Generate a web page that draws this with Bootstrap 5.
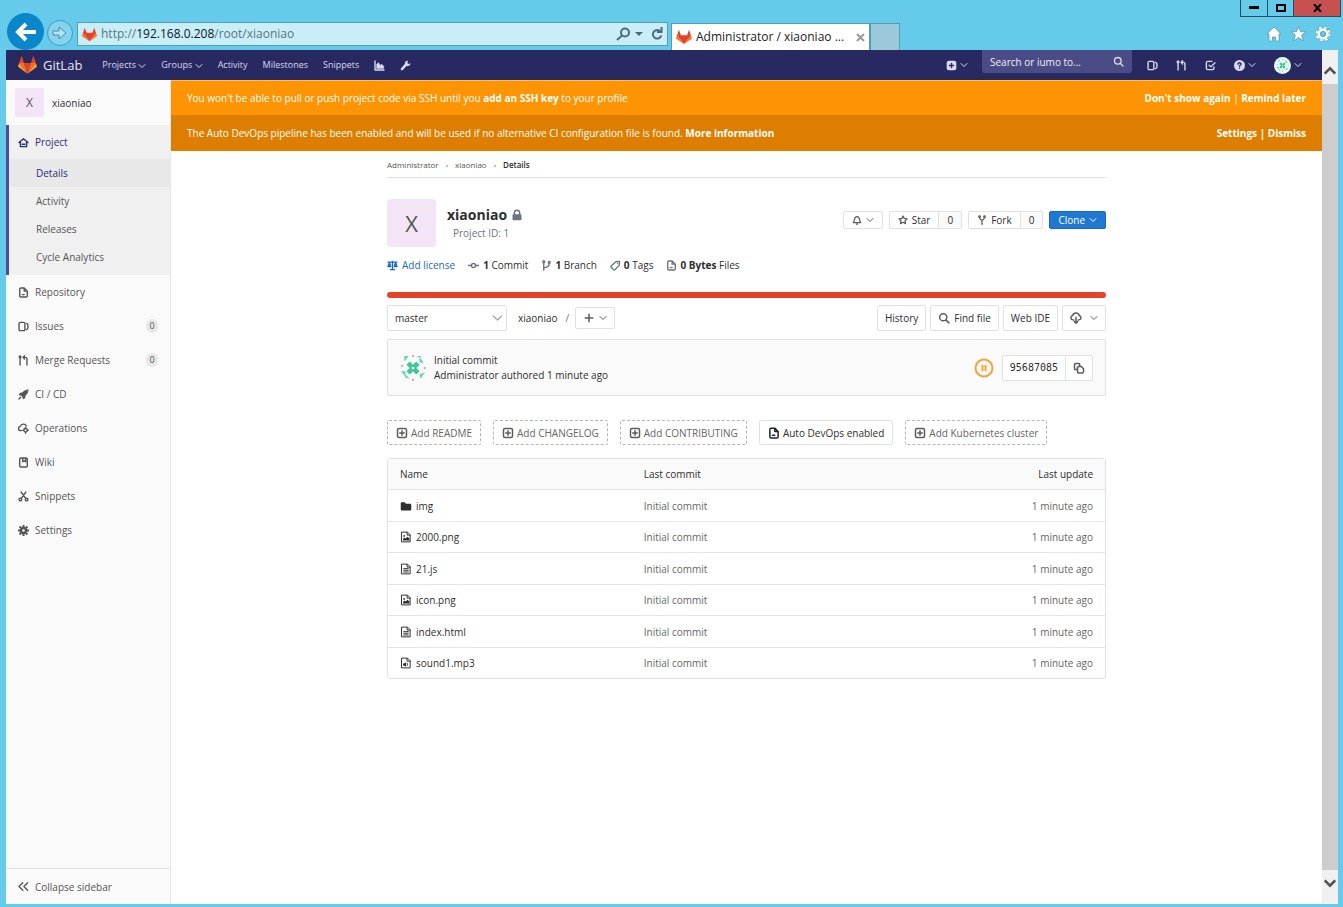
<!DOCTYPE html>
<html lang="en">
<head>
<meta charset="utf-8">
<meta name="viewport" content="width=device-width, initial-scale=1">
<title>Administrator / xiaoniao · GitLab</title>
<link href="https://cdn.jsdelivr.net/npm/bootstrap@5.3.0/dist/css/bootstrap.min.css" rel="stylesheet">
<style>
:root{--ui:"Open Sans","Noto Sans",sans-serif}
body{font-family:var(--ui);font-size:10px;line-height:16px;color:#2e2e2e;background:#66caea}
a{color:inherit;text-decoration:none}
button{font-family:inherit}
b{font-weight:700}
.ico{width:12px;height:12px;fill:none;stroke:currentColor;stroke-width:2;stroke-linecap:round;stroke-linejoin:round;flex:none}
.ico-sm{width:8px;height:8px}
.fox{flex:none}
.plain{border:0;background:none;padding:0;color:inherit;display:flex;align-items:center}
.tight{gap:3px}

/* browser window */
.window-top{height:50px;padding-left:7px}
.nav-back{width:37px;height:37px;border-radius:50%;background:#0a86cb;color:#fff;justify-content:center}
.nav-forward{width:26px;height:26px;margin-left:3px;border-radius:50%;border:1px solid #3f9cc4;background:#85d3ee;justify-content:center}
.address{flex:0 0 591px;height:24px;border:1px solid #4f9fb8;background:#c9eef8;font-size:12px;color:#557681}
.address b{font-weight:400;color:#08181f}
.tab-page{width:199px;height:27px;margin-left:3px;background:#fff;border:1px solid #4f9fb8;border-bottom:0;font-size:12px;color:#222}
.tab-new{width:30px;height:27px;background:#9cc9da;border:1px solid #4f9fb8;border-bottom:0}
.win-btns{height:17px;margin-right:2px}
.win-btns button{width:28px;height:17px;border:1px solid #25505f;border-top:0;justify-content:center;color:#000}
.win-btns button+button{width:26px;border-left:0}
.win-btns .win-close{width:47px!important;background:#c75050}
.frame{padding:0 5px 3px 6px}

/* application bar */
.app-bar{height:30px;background:#292961;color:#d9d9f0;font-size:9px}
.app-bar .ico{width:11px;height:11px}
.app-bar .ico-sm{width:8px;height:8px}
.app-bar .brand{font-size:13px;gap:6px;color:#e6e6f5}
.app-links{gap:15px}
.app-tools{gap:18px;margin-left:15px}
.new-menu{margin-right:14px}
.search-box{width:150px;height:23px;background:#4b4b85;border-radius:0 0 3px 3px}
.search-box input{width:100%;border:0;background:none;color:#fff;outline:0;padding:0;font-size:10px}
.search-box input::placeholder{color:#f0f0fa;opacity:1}

/* sidebar */
.side{width:165px;background:#fafafa;border-right:1px solid #e6e6e6;color:#555;flex:none}
.side-head{height:45px;padding-left:9px;color:#2e2e2e}
.letter{background:#f3e5f5;color:#555;display:flex;align-items:center;justify-content:center}
.letter-sm{width:29px;height:29px;border-radius:2px;font-size:12px}
.letter-lg{width:49px;height:48px;border-radius:4px;font-size:22px}
.side a{display:flex;align-items:center;height:34px;padding:0 12px;gap:6px}
.side .ico{width:11px;height:11px}
.side-group{background:#f0f0f0;border-left:3px solid #4b4ba3;padding-bottom:4px}
.side-group a{padding-left:9px}
.side-group .sub{height:28px;padding-left:27px}
.side-group .on{background:#e8e8e8}
.side .cur{color:#2f2a78}
.count{margin-left:auto;background:#e8e8e8;border-radius:8px;width:12px;height:14px;line-height:14px;text-align:center;font-size:9px}
.side .collapse-link{border-top:1px solid #e1e1e1;height:36px}

/* scroll bar */
.scroll{width:16px;flex:none;background:#cdcdcd}
.scroll button{height:34px;width:100%;background:#f0f0f0;justify-content:center;color:#505050}
.scroll .ico{width:14px;height:14px;stroke-width:3;stroke-linecap:butt;stroke-linejoin:miter}
.scroll .to-top{padding-top:8px}
.scroll .to-end{padding-bottom:8px}

/* banners */
.note{color:#fff;padding:0 16px}
.note-a{background:#fc9403;height:35px;border-top:1px solid #fdbc60}
.note-b{background:#de7e00;height:36px}

/* project page */
.page{width:100%;max-width:719px;margin:0 auto}
.crumbs{height:27px;padding-top:2px;gap:7px;border-bottom:1px solid #e1e1e1;font-size:8px;line-height:12px;color:#555}
.crumbs b{font-weight:600;color:#2e2e2e}
.proj-head{margin-top:21px}
.proj-name{font-size:14px;line-height:18px}
.proj-title{padding:7px 0 0 11px}
.proj-id{padding-left:6px;line-height:18px}
.proj-actions{gap:6px;margin-top:12px}
.proj-stats{gap:13px;margin-top:10px}
.proj-stats .ico{width:11px;height:11px}
.add-license{color:#1b69b6}
.btn-x{--bs-btn-font-size:10px;--bs-btn-line-height:16px;--bs-btn-padding-y:4px;--bs-btn-padding-x:7px;--bs-btn-color:#2e2e2e;--bs-btn-bg:#fff;--bs-btn-border-color:#e1e1e1;--bs-btn-border-radius:2px;display:inline-flex;align-items:center;white-space:nowrap;gap:4px}
.btn-x .ico{color:#5c5c5c}
.btn-s{--bs-btn-padding-y:0px;--bs-btn-padding-x:8px;height:18px}
.btn-s .ico{width:10px;height:10px}
.btn-s .ico-sm{width:8px;height:8px}
.btn-add{--bs-btn-padding-x:8px;height:25px;gap:3px}
.btn-dash{--bs-btn-color:#666;border:1px dashed #b5b5b5}
.btn-clone{--bs-btn-color:#fff;--bs-btn-bg:#1f78d1;--bs-btn-border-color:#1b69b6}
.btn-clone .ico{color:#fff}
.num{background:#fafafa}
.lang-bar{height:6px;margin-top:19px;border-radius:3px;background:#e24329}
.tree-bar{margin-top:7px}
.tree-path{margin-left:11px}
.slash{margin:0 6px 0 8px}
.ref-pick{width:120px;height:26px;border:1px solid #e1e1e1;border-radius:2px;padding:0 7px;font-size:10px;color:#2e2e2e;background:#fff;appearance:none;display:block}
.ref-arrow{width:11px;color:#aaa;pointer-events:none}
.commit{height:57px;background:#fafafa;border:1px solid #e1e1e1;border-radius:2px;padding:0 12px;line-height:15px}
.sha{font-family:"DejaVu Sans Mono",monospace}
.add-row{gap:12px}
.files{--bs-table-bg:transparent;margin:13px 0 0;font-size:10px;color:#2e2e2e;border:1px solid #e1e1e1;border-collapse:separate;border-spacing:0;border-radius:3px;table-layout:fixed}
.files th,.files td{font-weight:400;padding:0 12px;vertical-align:middle;border:0;border-top:1px solid #e5e5e5}
.files th{background:#fafafa;border:0;height:30px}
.files .col-name{width:34%}
.files td{height:32px;color:#666}
.files tr:nth-child(even) td{height:31px}
.files td:first-child{color:#2e2e2e}
.files .ico{margin-right:4px;vertical-align:-2px}
</style>
</head>
<body>
<svg class="d-none" aria-hidden="true">
  <symbol id="fox" viewBox="0 0 36 34"><path fill="#e24329" d="M18 33.500l6.600-20.300H11.400z"/><path fill="#fc6d26" d="M18 33.500L11.400 13.200H2.200zM18 33.500l6.600-20.300h9.200z"/><path fill="#fca326" d="M2.200 13.200L.2 19.400c-.2.600 0 1.200.5 1.500L18 33.500zM33.800 13.200l2 6.200c.2.600 0 1.200-.5 1.500L18 33.500z"/><path fill="#e24329" d="M2.200 13.200h9.200L7.500 1c-.2-.6-1.100-.6-1.300 0zM33.800 13.200h-9.200L28.500 1c.2-.6 1.100-.6 1.300 0z"/></symbol>
  <symbol id="favfox" viewBox="0 0 36 34"><path fill="#e24329" d="M2 13h32L18 33z"/><path fill="#fc6d26" d="M.2 19.400L2.500 13l15.500 20L.7 20.900zM35.800 19.400L33.500 13 18 33l17.300-12.100z"/><path fill="#e24329" d="M2.200 14L6.500.5 11.500 14zM33.800 14L29.500.5 24.500 14z"/></symbol>
  <symbol id="down" viewBox="0 0 16 16"><path d="M2 5l6 6 6-6"/></symbol>
  <symbol id="up" viewBox="0 0 16 16"><path d="M2 11l6-6 6 6"/></symbol>
  <symbol id="home" viewBox="0 0 16 16"><path d="M1.500 8L8 2.500 14.500 8M3.500 7.500V14h9V7.500M6 10.500h4"/></symbol>
  <symbol id="doc" viewBox="0 0 16 16"><path d="M4 1.500h5L13.500 6v7a1.500 1.500 0 0 1-1.500 1.500H4A1.500 1.500 0 0 1 2.500 13V3A1.500 1.500 0 0 1 4 1.500zM9 2v4h4M6 11h3"/></symbol>
  <symbol id="issues" viewBox="0 0 16 16"><path d="M3 2h5.500A1.500 1.500 0 0 1 10 3.500v9A1.500 1.500 0 0 1 8.500 14H3a1.500 1.500 0 0 1-1.500-1.500v-9A1.500 1.500 0 0 1 3 2zM12.500 3.500c1.300.6 2 1.500 2 3v3c0 1.500-.7 2.400-2 3"/></symbol>
  <symbol id="merge" viewBox="0 0 16 16"><path d="M3 5v9.500M8 3.500h3a2 2 0 0 1 2 2v9M9.500 1L7.500 3.500l2 2.500"/><circle cx="3" cy="2.800" r="1.300"/></symbol>
  <symbol id="rocket" viewBox="0 0 16 16"><path fill="currentColor" stroke-width="1" d="M14.500 1.500c-4 0-6 1.500-8 4l-3.500.5-1.500 2.500 3 .5L7 11.500l.5 3L10 13l.5-3.500c2.500-2 4-4 4-8z"/><path d="M1.500 14.500L4 12"/></symbol>
  <symbol id="ops" viewBox="0 0 16 16"><path d="M5 11H4a3 3 0 0 1-.5-6A4.500 4.500 0 0 1 12 4.500"/><circle cx="11" cy="10.500" r="2.500"/><path d="M11 6.500v1M11 14v1M8 10.500H7M15 10.500h-1"/></symbol>
  <symbol id="book" viewBox="0 0 16 16"><path d="M4 1.500h8A1.500 1.500 0 0 1 13.500 3v10a1.500 1.500 0 0 1-1.500 1.500H4A1.500 1.500 0 0 1 2.500 13V3A1.500 1.500 0 0 1 4 1.500zM7 2v5l2-1.500L11 7V2"/></symbol>
  <symbol id="cut" viewBox="0 0 16 16"><circle cx="3.500" cy="12.500" r="2"/><circle cx="12.500" cy="12.500" r="2"/><path d="M4.500 1.500l7 9.500M11.500 1.500l-7 9.500"/></symbol>
  <symbol id="gear" viewBox="0 0 16 16"><circle cx="8" cy="8" r="3.700" stroke-width="3.500"/><path stroke-width="3" stroke-linecap="butt" d="M8 0v3M8 13v3M0 8h3M13 8h3M2.300 2.300l2 2M11.700 11.700l2 2M2.300 13.700l2-2M11.700 4.300l2-2"/></symbol>
  <symbol id="left2" viewBox="0 0 16 16"><path d="M7 2.500L1.500 8 7 13.500M14 2.500L8.500 8l5.500 5.500"/></symbol>
  <symbol id="glass" viewBox="0 0 16 16"><circle cx="7" cy="7" r="4.800"/><path d="M10.500 10.500L14.500 14.500"/></symbol>
  <symbol id="todo" viewBox="0 0 16 16"><path d="M10 2H4a2 2 0 0 0-2 2v8a2 2 0 0 0 2 2h7a2 2 0 0 0 2-2v-2M6 7.500l2.500 2.500L14.500 4"/></symbol>
  <symbol id="help" viewBox="0 0 16 16"><circle cx="8" cy="8" r="8" fill="currentColor" stroke="none"/><path stroke="#292961" d="M5.800 6.200c0-3 4.600-2.800 4.400 0C10.100 7.600 8 7.700 8 9.300M8 12v.1"/></symbol>
  <symbol id="plusbox" viewBox="0 0 16 16"><rect x="2" y="2" width="12" height="12" rx="2"/><path d="M8 5v6M5 8h6"/></symbol>
  <symbol id="plusfill" viewBox="0 0 16 16"><rect x="1" y="1" width="14" height="14" rx="3" fill="currentColor" stroke="none"/><path stroke="#292961" d="M8 5v6M5 8h6"/></symbol>
  <symbol id="plus" viewBox="0 0 16 16"><path d="M8 3v10M3 8h10"/></symbol>
  <symbol id="chart" viewBox="0 0 16 16"><path d="M1.500 1.500v13h13"/><path fill="currentColor" stroke-width="1" d="M4 12V6l2.500-2L9 8l2-2 3 3v3z"/></symbol>
  <symbol id="wrench" viewBox="0 0 16 16"><path fill="currentColor" stroke="none" d="M15 4.500L12.500 6 10.500 4 12 1.200C9 .3 6.500 2.600 7.200 5.600L1.600 12c-1.500 2 1 4 2.600 2.500L9.500 8.700c3.500 1 6-1.400 5.500-4.200z"/></symbol>
  <symbol id="lock" viewBox="0 0 16 16"><rect x="2" y="7" width="12" height="8" rx="1.500" fill="currentColor" stroke="none"/><path d="M4.500 8V5a3.500 3.500 0 0 1 7 0v3"/></symbol>
  <symbol id="scale" viewBox="0 0 16 16"><path d="M1.500 3h13M8 2v12M5 14h6"/><path fill="currentColor" fill-opacity=".4" d="M3.500 4L1.500 9.500h4zM12.500 4l-2 5.500h4z"/></symbol>
  <symbol id="commit" viewBox="0 0 16 16"><circle cx="8" cy="8" r="3"/><path d="M0 8h4.500M11.500 8H16"/></symbol>
  <symbol id="branch" viewBox="0 0 16 16"><circle cx="4" cy="2.500" r="1.400"/><circle cx="12" cy="3.500" r="1.400"/><path d="M4 4v11M4 11c5 0 8-2 8-6"/></symbol>
  <symbol id="fork" viewBox="0 0 16 16"><circle cx="4" cy="2.800" r="1.300"/><circle cx="12" cy="2.800" r="1.300"/><path d="M4 4c0 3 4 3 4 5.500C8 7 12 7 12 4M8 9v6"/></symbol>
  <symbol id="tag" viewBox="0 0 16 16"><path d="M8.500 2.500L14 2l-.5 5.500-6 6.500c-.8.800-1.700.8-2.500 0L2 11c-.8-.8-.8-1.700 0-2.500z"/><path d="M11 5v.1"/></symbol>
  <symbol id="bell" viewBox="0 0 16 16"><path d="M2 12c1.500-1.500 1.500-3 2-5 .5-3 2-4.500 4-4.500S11.500 4 12 7c.5 2 .5 3.500 2 5zM7 14.500h2"/></symbol>
  <symbol id="star" viewBox="0 0 16 16"><path d="M8 1.500l2 4 4.500.7-3.200 3.100.7 4.500-4-2.100-4 2.100.7-4.500L1.500 6.200 6 5.500z"/></symbol>
  <symbol id="cloud" viewBox="0 0 16 16"><path d="M5 10.500H4a3 3 0 0 1-.5-5.900 4.700 4.700 0 0 1 9 .4 2.800 2.800 0 0 1-.5 5.500h-1M8 7v8M5.800 12.800L8 15l2.200-2.200"/></symbol>
  <symbol id="copy" viewBox="0 0 16 16"><path d="M5 10H3.500A1.500 1.500 0 0 1 2 8.500v-5A1.500 1.500 0 0 1 3.500 2h4A1.500 1.500 0 0 1 9 3.500V5M7.500 6H11l3 3v4a1.500 1.500 0 0 1-1.500 1.500h-5A1.500 1.500 0 0 1 6 13V7.500A1.500 1.500 0 0 1 7.500 6z"/></symbol>
  <symbol id="folder" viewBox="0 0 16 16"><path fill="currentColor" stroke="none" d="M1 4.500C1 3.700 1.700 3 2.500 3h3.700L8 5h5.500c.8 0 1.500.7 1.500 1.500v6c0 .8-.7 1.500-1.500 1.500h-11C1.700 14 1 13.300 1 12.500z"/></symbol>
  <symbol id="fimg" viewBox="0 0 16 16"><path stroke-width="1.300" d="M2.500 1.500h7.500l3.500 3.500v9.500h-11zM9.500 2v3.500h4"/><path fill="currentColor" stroke="none" d="M4 12.500v-2l2-2 1.500 1.500L10 7.500l2.500 2.500v2.500z"/><circle cx="5.500" cy="6.500" r="1.200" fill="currentColor" stroke="none"/></symbol>
  <symbol id="ftext" viewBox="0 0 16 16"><path stroke-width="1.300" d="M2.500 1.500h7.500l3.500 3.500v9.500h-11zM9.500 2v3.500h4M5 7.500h6M5 9.700h6M5 12h6"/></symbol>
  <symbol id="fsnd" viewBox="0 0 16 16"><path stroke-width="1.300" d="M2.500 1.500h7.500l3.500 3.500v9.500h-11zM9.500 2v3.500h4M9.500 8c.8 1 .8 2.500 0 3.500"/><path fill="currentColor" stroke="none" d="M4 8.700h1.500L8 7v6l-2.500-1.700H4z"/></symbol>
  <symbol id="ident" viewBox="0 0 24 24"><path fill="#3ac79a" d="M9 6l3 3 3-3 3 3-3 3 3 3-3 3-3-3-3 3-3-3 3-3-3-3z"/><path fill="#fff" d="M12 10.500l1.500 1.500-1.500 1.500-1.500-1.500z"/><path fill="#57d9b1" d="M4 1h4l-4 5zM18 2l4 5h-4zM1 15h4v5zM18 18l5-2-4 6zM9 22l-4-1v-3zM15 1h4v2z"/><path fill="#e0a9bb" d="M11 0h2v2h-2zM1 9h2v2H1zM22 11h2v2h-2zM11 22h2v2h-2z"/></symbol>
</svg>

<div class="d-flex flex-column min-vh-100">
  <header class="window-top d-flex align-items-end">
    <button class="plain nav-back" aria-label="Back"><svg width="22" height="20" viewBox="0 0 22 20" fill="none" stroke="#fff" stroke-width="4"><path d="M21 10H4M11 2l-8 8 8 8"/></svg></button>
    <button class="plain nav-forward mb-1" aria-label="Forward"><svg width="16" height="14" viewBox="0 0 16 14" fill="#b5e5f5" stroke="#3f8fae"><path d="M1 5h6V1l7 6-7 6V9H1z"/></svg></button>
    <div class="address d-flex align-items-center ms-1 mb-1 px-1">
      <svg class="fox" width="15" height="15"><use href="#favfox"/></svg>
      <span class="ms-1 flex-grow-1" role="textbox" aria-label="Address">http://<b>192.168.0.208</b>/root/xiaoniao</span>
      <button class="plain" aria-label="Search"><svg width="15" height="14" viewBox="0 0 15 14" fill="none" stroke="#4d6c78" stroke-width="2"><circle cx="9" cy="5.500" r="4"/><path d="M6 8.500L1 13"/></svg></button>
      <button class="plain ms-1" aria-label="Address list"><svg width="8" height="5" viewBox="0 0 8 5" fill="#4d6c78"><path d="M0 0h8L4 4z"/></svg></button>
      <button class="plain ms-2" aria-label="Refresh"><svg width="12" height="14" viewBox="0 0 12 14" fill="none" stroke="#4d6c78" stroke-width="2"><path d="M9.500 4.500a4.300 4.300 0 1 0 .8 4M10.500 0v5H6"/></svg></button>
    </div>
    <div class="tab-page d-flex align-items-center px-1">
      <svg class="fox" width="16" height="16"><use href="#favfox"/></svg>
      <span class="ms-1 flex-grow-1 text-nowrap">Administrator / xiaoniao ...</span>
      <button class="plain" aria-label="Close tab"><svg width="9" height="9" viewBox="0 0 9 9" stroke="#999" stroke-width="2"><path d="M1 1l7 7M8 1L1 8"/></svg></button>
    </div>
    <button class="tab-new" aria-label="New tab"></button>
    <div class="ms-auto align-self-stretch d-flex flex-column align-items-end">
      <div class="win-btns d-flex">
        <button class="plain" aria-label="Minimize"><svg width="10" height="4"><path d="M0 0h10v3H0z"/></svg></button>
        <button class="plain" aria-label="Maximize"><svg width="10" height="8" fill="none" stroke="#000" stroke-width="2"><path d="M1 1h8v6H1z"/></svg></button>
        <button class="plain win-close" aria-label="Close"><svg width="9" height="8" viewBox="0 0 9 8" stroke="#000" stroke-width="2"><path d="M1 0l7 8M8 0L1 8"/></svg></button>
      </div>
      <div class="d-flex mt-auto mb-2 me-2 pe-1 gap-2">
        <button class="plain" aria-label="Home"><svg width="16" height="16" viewBox="0 0 16 16" fill="#fff" stroke="#5a8da0" stroke-width=".7"><path d="M8 1l7 7h-2v7H9.500v-4h-3v4H3V8H1z"/></svg></button>
        <button class="plain" aria-label="Favorites"><svg width="17" height="16" viewBox="0 0 16 16" fill="#fff" stroke="#5a8da0" stroke-width=".7"><path d="M8 .5l2 5.300h5.500L11.200 9l1.600 6L8 11.500 3.200 15l1.600-6L.5 5.800H6z"/></svg></button>
        <button class="plain" aria-label="Tools"><svg width="16" height="16" viewBox="0 0 16 16" fill="none" stroke="#fff"><circle cx="8" cy="8" r="6.800" stroke="#5a8da0" stroke-width="2.400" stroke-dasharray="2.670"/><circle cx="8" cy="8" r="6.500" stroke-width="2" stroke-dasharray="2.550"/><circle cx="8" cy="8" r="4.200" stroke-width="2.500"/><circle cx="8" cy="8" r="2.500" stroke="#5a8da0" stroke-width=".7"/></svg></button>
      </div>
    </div>
  </header>

  <div class="frame d-flex flex-grow-1">
    <div class="flex-grow-1 d-flex flex-column">
      <nav class="app-bar d-flex align-items-center ps-2" aria-label="Main">
        <a href="#" class="brand d-flex align-items-center ms-1"><svg class="fox" width="19" height="18"><use href="#fox"/></svg>GitLab</a>
        <div class="app-links d-flex align-items-center ms-3 ps-1">
          <a href="#">Projects <svg class="ico ico-sm"><use href="#down"/></svg></a>
          <a href="#">Groups <svg class="ico ico-sm"><use href="#down"/></svg></a>
          <a href="#">Activity</a><a href="#">Milestones</a><a href="#">Snippets</a>
          <a href="#" class="d-flex" aria-label="Charts"><svg class="ico"><use href="#chart"/></svg></a>
          <a href="#" class="d-flex" aria-label="Admin area"><svg class="ico"><use href="#wrench"/></svg></a>
        </div>
        <div class="ms-auto d-flex align-items-center align-self-stretch me-3 pe-1">
          <button class="plain tight new-menu" aria-label="New"><svg class="ico"><use href="#plusfill"/></svg><svg class="ico ico-sm"><use href="#down"/></svg></button>
          <label class="search-box d-flex align-items-center align-self-start px-2"><input type="search" placeholder="Search or iumo to..." aria-label="Search"><svg class="ico"><use href="#glass"/></svg></label>
          <div class="app-tools d-flex align-items-center">
            <a href="#" class="d-flex" aria-label="Issues"><svg class="ico"><use href="#issues"/></svg></a>
            <a href="#" class="d-flex" aria-label="Merge requests"><svg class="ico"><use href="#merge"/></svg></a>
            <a href="#" class="d-flex" aria-label="To-do"><svg class="ico"><use href="#todo"/></svg></a>
            <button class="plain tight" aria-label="Help"><svg class="ico"><use href="#help"/></svg><svg class="ico ico-sm"><use href="#down"/></svg></button>
            <button class="plain tight" aria-label="Account"><svg width="17" height="17" viewBox="-4 -4 32 32"><circle cx="12" cy="12" r="16" fill="#e9fbf5"/><use href="#ident" width="24" height="24"/></svg><svg class="ico ico-sm"><use href="#down"/></svg></button>
          </div>
        </div>
      </nav>

      <div class="d-flex flex-grow-1">
        <aside class="side d-flex flex-column">
          <div class="side-head d-flex align-items-center"><span class="letter letter-sm me-2">X</span>xiaoniao</div>
          <div class="side-group">
            <a href="#" class="cur"><svg class="ico"><use href="#home"/></svg>Project</a>
            <a href="#" class="sub cur on">Details</a>
            <a href="#" class="sub">Activity</a>
            <a href="#" class="sub">Releases</a>
            <a href="#" class="sub">Cycle Analytics</a>
          </div>
          <a href="#"><svg class="ico"><use href="#doc"/></svg>Repository</a>
          <a href="#"><svg class="ico"><use href="#issues"/></svg>Issues<span class="count">0</span></a>
          <a href="#"><svg class="ico"><use href="#merge"/></svg>Merge Requests<span class="count">0</span></a>
          <a href="#"><svg class="ico"><use href="#rocket"/></svg>CI / CD</a>
          <a href="#"><svg class="ico"><use href="#ops"/></svg>Operations</a>
          <a href="#"><svg class="ico"><use href="#book"/></svg>Wiki</a>
          <a href="#"><svg class="ico"><use href="#cut"/></svg>Snippets</a>
          <a href="#"><svg class="ico"><use href="#gear"/></svg>Settings</a>
          <a href="#" class="collapse-link mt-auto"><svg class="ico"><use href="#left2"/></svg>Collapse sidebar</a>
        </aside>

        <main class="flex-grow-1 bg-white">
          <div class="note note-a d-flex align-items-center justify-content-between"><span>You won't be able to pull or push project code via SSH until you <a href="#"><b>add an SSH key</b></a> to your profile</span><span><a href="#"><b>Don't show again</b></a> | <a href="#"><b>Remind later</b></a></span></div>
          <div class="note note-b d-flex align-items-center justify-content-between"><span>The Auto DevOps pipeline has been enabled and will be used if no alternative CI configuration file is found. <a href="#"><b>More information</b></a></span><span><a href="#"><b>Settings</b></a> <b>|</b> <a href="#"><b>Dismiss</b></a></span></div>

          <div class="page">
            <nav class="crumbs d-flex align-items-center" aria-label="Breadcrumb"><a href="#">Administrator</a><span>›</span><a href="#">xiaoniao</a><span>›</span><b>Details</b></nav>

            <div class="proj-head d-flex">
              <div class="letter letter-lg">X</div>
              <div class="proj-title">
                <h1 class="proj-name fw-bold m-0 d-flex align-items-center gap-1">xiaoniao <svg class="ico text-secondary"><use href="#lock"/></svg></h1>
                <div class="proj-id text-secondary">Project ID: 1</div>
              </div>
              <div class="proj-actions ms-auto d-flex align-self-start">
                <button class="btn btn-x btn-s" aria-label="Notifications"><svg class="ico"><use href="#bell"/></svg><svg class="ico ico-sm"><use href="#down"/></svg></button>
                <div class="btn-group"><button class="btn btn-x btn-s"><svg class="ico"><use href="#star"/></svg>Star</button><button class="btn btn-x btn-s num">0</button></div>
                <div class="btn-group"><button class="btn btn-x btn-s"><svg class="ico"><use href="#fork"/></svg>Fork</button><button class="btn btn-x btn-s num">0</button></div>
                <button class="btn btn-x btn-s btn-clone">Clone <svg class="ico ico-sm"><use href="#down"/></svg></button>
              </div>
            </div>

            <div class="proj-stats d-flex align-items-center">
              <a href="#" class="add-license gap-1 d-flex align-items-center"><svg class="ico"><use href="#scale"/></svg>Add license</a>
              <a href="#" class="gap-1 d-flex align-items-center"><svg class="ico text-secondary"><use href="#commit"/></svg><span><b>1</b> Commit</span></a>
              <a href="#" class="tight d-flex align-items-center"><svg class="ico text-secondary"><use href="#branch"/></svg><span><b>1</b> Branch</span></a>
              <a href="#" class="tight d-flex align-items-center"><svg class="ico text-secondary"><use href="#tag"/></svg><span><b>0</b> Tags</span></a>
              <a href="#" class="tight d-flex align-items-center"><svg class="ico text-secondary"><use href="#doc"/></svg><span><b>0 Bytes</b> Files</span></a>
            </div>

            <div class="lang-bar"></div>

            <div class="tree-bar d-flex align-items-center">
              <div class="position-relative"><select class="ref-pick" aria-label="Branch"><option>master</option></select><svg class="ico ref-arrow position-absolute end-0 top-50 translate-middle-y me-1"><use href="#down"/></svg></div>
              <a href="#" class="tree-path">xiaoniao</a><span class="slash text-secondary">/</span>
              <button class="btn btn-x" aria-label="Add to tree"><svg class="ico"><use href="#plus"/></svg><svg class="ico ico-sm"><use href="#down"/></svg></button>
              <div class="gap-1 ms-auto d-flex">
                <a href="#" class="btn btn-x">History</a>
                <a href="#" class="btn btn-x"><svg class="ico"><use href="#glass"/></svg>Find file</a>
                <button class="btn btn-x">Web IDE</button>
                <button class="btn btn-x gap-2" aria-label="Download"><svg class="ico"><use href="#cloud"/></svg><svg class="ico ico-sm"><use href="#down"/></svg></button>
              </div>
            </div>

            <div class="commit d-flex align-items-center mt-2">
              <svg width="26" height="26" viewBox="0 0 24 24"><use href="#ident"/></svg>
              <div class="ms-2"><a href="#" class="d-block">Initial commit</a><a href="#">Administrator</a> authored 1 minute ago</div>
              <svg class="ms-auto" width="20" height="20" viewBox="0 0 20 20" fill="#fff7e6" stroke="#e9a54a" stroke-width="2"><circle cx="10" cy="10" r="8.500"/><path d="M8.500 7v6M11.500 7v6"/></svg>
              <div class="btn-group ms-2"><span class="btn btn-x sha">95687085</span><button class="btn btn-x" aria-label="Copy commit SHA"><svg class="ico"><use href="#copy"/></svg></button></div>
            </div>

            <div class="add-row d-flex mt-4">
              <a href="#" class="btn btn-x btn-add btn-dash"><svg class="ico"><use href="#plusbox"/></svg>Add README</a>
              <a href="#" class="btn btn-x btn-add btn-dash"><svg class="ico"><use href="#plusbox"/></svg>Add CHANGELOG</a>
              <a href="#" class="btn btn-x btn-add btn-dash"><svg class="ico"><use href="#plusbox"/></svg>Add CONTRIBUTING</a>
              <a href="#" class="btn btn-x btn-add"><svg class="ico text-dark"><use href="#doc"/></svg>Auto DevOps enabled</a>
              <a href="#" class="btn btn-x btn-add btn-dash"><svg class="ico"><use href="#plusbox"/></svg>Add Kubernetes cluster</a>
            </div>

            <table class="table files">
              <colgroup><col class="col-name"><col><col></colgroup>
              <thead><tr><th>Name</th><th>Last commit</th><th class="text-end">Last update</th></tr></thead>
              <tbody>
                <tr><td><svg class="ico"><use href="#folder"/></svg><a href="#">img</a></td><td>Initial commit</td><td class="text-end">1 minute ago</td></tr>
                <tr><td><svg class="ico"><use href="#fimg"/></svg><a href="#">2000.png</a></td><td>Initial commit</td><td class="text-end">1 minute ago</td></tr>
                <tr><td><svg class="ico"><use href="#ftext"/></svg><a href="#">21.js</a></td><td>Initial commit</td><td class="text-end">1 minute ago</td></tr>
                <tr><td><svg class="ico"><use href="#fimg"/></svg><a href="#">icon.png</a></td><td>Initial commit</td><td class="text-end">1 minute ago</td></tr>
                <tr><td><svg class="ico"><use href="#ftext"/></svg><a href="#">index.html</a></td><td>Initial commit</td><td class="text-end">1 minute ago</td></tr>
                <tr><td><svg class="ico"><use href="#fsnd"/></svg><a href="#">sound1.mp3</a></td><td>Initial commit</td><td class="text-end">1 minute ago</td></tr>
              </tbody>
            </table>
          </div>
        </main>
      </div>
    </div>
    <div class="scroll d-flex flex-column justify-content-between">
      <button class="plain to-top" aria-label="Scroll up"><svg class="ico"><use href="#up"/></svg></button>
      <button class="plain to-end" aria-label="Scroll down"><svg class="ico"><use href="#down"/></svg></button>
    </div>
  </div>
</div>
<script src="https://cdn.jsdelivr.net/npm/bootstrap@5.3.0/dist/js/bootstrap.bundle.min.js"></script>
</body>
</html>
